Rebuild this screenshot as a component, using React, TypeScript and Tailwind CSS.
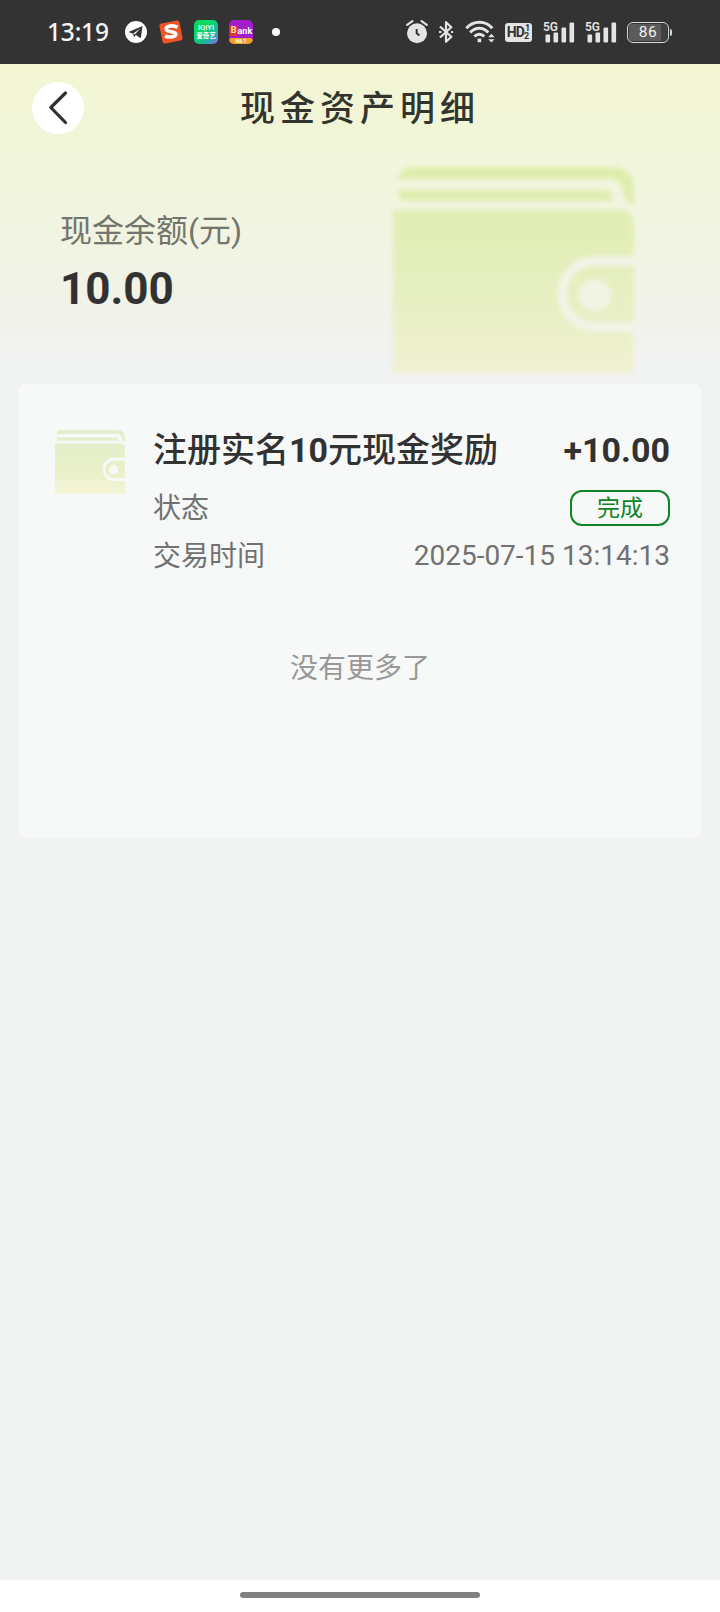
import React from 'react';

const records = [
  { id: 1, title: '注册实名10元现金奖励', amount: '+10.00', status: '完成', time: '2025-07-15 13:14:13' },
];

export default function App() {
  return (
    <div className="w-[720px] h-[1612px] flex flex-col overflow-hidden bg-[#f1f3f2] text-[#323232] font-[Roboto,'Noto_Sans_CJK_SC',sans-serif]">
      <StatusBar />

      {/* Header + balance */}
      <div className="relative h-[320px] shrink-0 bg-[linear-gradient(180deg,#f2f6d2_0%,#f1f5dc_35%,#f1f3e8_72%,#f2f2ee_86%,#f1f2f2_92%,#f1f3f3_100%)]">
        <Wallet id="hero" className="absolute left-[393px] top-[102px] w-[241px] h-[208px] blur-[2px]" line="#f1f3e5" from="#deedab" mid="#e6efc1" to="#f0f0d2" />
        <header className="relative flex items-center justify-center h-[88px]">
          <button className="absolute left-8 top-[18px] size-[52px] rounded-full bg-white">
            <svg viewBox="0 0 52 52" className="size-[52px]" fill="none" stroke="#303030" strokeWidth="3.2" strokeLinecap="round" strokeLinejoin="round">
              <path d="M33.5 11 18.8 25.5 33.5 40.5" />
            </svg>
          </button>
          <h1 className="pt-[2px] text-[35px] leading-none font-medium tracking-[5px] text-[#33342d]">现金资产明细</h1>
        </header>
        <div className="relative pt-[57px] pl-[60px]">
          <p className="text-[32px] leading-[44px] text-[#74766d]">现金余额(元)</p>
          <p className="mt-[8px] text-[44px] leading-[56px] font-bold">10.00</p>
        </div>
      </div>

      {/* Records */}
      <div className="mx-[18px] h-[454px] rounded-lg bg-[#f7f9f8] pt-[44px] pl-[37px] pr-[32px]">
        {records.map(r => (
          <div key={r.id} className="flex">
            <Wallet id="row" className="w-[70px] h-[64px] mt-[2px] blur-[0.6px] shrink-0" line="#f7f9f6" from="#e4edcc" mid="#e8f0c8" to="#f4f4d6" />
            <div className="flex-1 ml-[28px]">
              <div className="flex items-center justify-between h-[44px] text-[34px] leading-[44px]">
                <span className="font-medium">{r.title.split(/(\d+)/).map((part, i) => (
                  <span key={i} className={/\d/.test(part) ? 'font-bold' : ''}>{part}</span>
                ))}</span>
                <span className="font-bold">{r.amount}</span>
              </div>
              <div className="flex items-center justify-between mt-[12px] h-[48px] text-[28px] text-[#707170]">
                <span className="pt-[2px]">状态</span>
                <span className="w-[100px] h-[36px] flex items-center justify-center rounded-[12px] border-2 border-[#0e8426] text-[23px] leading-none text-[#0e8426]">{r.status}</span>
              </div>
              <div className="flex items-center justify-between h-[48px] text-[28px] text-[#707170]">
                <span className="pt-[2px]">交易时间</span>
                <span>{r.time}</span>
              </div>
            </div>
          </div>
        ))}
        <p className="mt-[69px] -ml-[5px] text-center text-[28px] leading-[40px] text-[#979897]">没有更多了</p>
      </div>

      <div className="mt-auto h-8 flex items-center justify-center bg-white">
        <div className="w-[240px] h-[6px] mb-[2px] rounded-full bg-[#808080]" />
      </div>
    </div>
  );
}

function StatusBar() {
  return (
    <div className="h-16 shrink-0 flex items-center bg-[#333333] text-[#e4e4e4]">
      <span className="w-[78px] ml-[47px] text-[24.5px] leading-none font-medium tracking-[-0.2px] text-[#f4f4f4] font-['Noto_Sans',sans-serif] whitespace-nowrap">13:19</span>

      {/* Telegram */}
      <svg viewBox="0 0 22 22" className="size-[22px]">
        <circle cx="11" cy="11" r="11" fill="#fff" />
        <path d="M3.5 11 17.5 5 15.8 17.2 10.8 14 9 16.3 8 12.7Z" fill="#333" />
        <path d="M8.3 12.6 15.5 7.2 9.8 13.4" fill="#fff" />
      </svg>

      {/* Sogou */}
      <svg viewBox="0 0 24 24" className="size-6 ml-[12px]">
        <rect x="1.8" y="1.8" width="20.4" height="20.4" rx="2.5" fill="#ee5426" transform="rotate(-11 12 12)" />
        <path d="M18.5 7.4C14 4.6 6.8 6 7.2 9.2 7.6 12.4 16.8 11 16.8 14 16.8 17.3 9.6 17.8 6 15.9" fill="none" stroke="#fff" strokeWidth="3.6" />
      </svg>

      {/* iQIYI */}
      <div className="size-6 ml-[11px] rounded-[5px] flex flex-col items-center justify-center bg-[linear-gradient(135deg,#05d95f_35%,#1cb6a2_70%,#8b64ee)] text-white font-bold overflow-hidden">
        <span className="text-[7.5px] leading-[8px] font-medium">IQIYI</span>
        <span className="text-[6.5px] leading-[8px] whitespace-nowrap">爱奇艺</span>
      </div>

      {/* Bank */}
      <div className="size-6 ml-[11px] rounded-[5px] flex flex-col justify-end bg-[#a51dcb] text-white font-bold overflow-hidden">
        <span className="flex items-center justify-center h-[14px] text-[9px] leading-none">
          <span className="bg-[#df3433] text-[#ffe3b0] h-[10px] px-px">B</span>ank
        </span>
        <span className="h-[6px] rounded-t-[3px] bg-[#f5a02b] text-center text-[5px] leading-[6px]">N6·1</span>
      </div>

      <span className="size-2 ml-[19px] rounded-full bg-white" />

      {/* Alarm */}
      <svg viewBox="0 0 22 24" className="w-[22px] h-6 ml-[126px]" fill="none" stroke="currentColor">
        <circle cx="11" cy="13.2" r="10" fill="currentColor" stroke="none" />
        <path d="M1.2 4.8 6.4 1.2M20.8 4.8 15.6 1.2" strokeWidth="2.2" strokeLinecap="round" />
        <path d="M10.7 9V13.2L13.4 15.6" stroke="#333" strokeWidth="2" />
      </svg>

      {/* Bluetooth */}
      <svg viewBox="0 0 14 22" className="w-[14px] h-[22px] ml-[11px]" fill="none" stroke="currentColor" strokeWidth="2.2" strokeLinejoin="round">
        <path d="M1 5.5 12.3 15.8 7 20.8V1.2L12.3 6.2 1 16.5" />
        <path d="M0 11H2.4M12 11H14.4" />
      </svg>

      {/* Wifi */}
      <svg viewBox="0 0 30 24" className="w-[30px] h-6 ml-[12px]" fill="none" stroke="currentColor" strokeWidth="3">
        <path d="M1.3 8.2C8.5.2 20.5.2 27.3 8.2M5.2 12.4C10.3 6.8 18.3 6.8 23.2 12.4M9.4 16.6C12.3 13.5 16.4 13.5 19.2 16.6" />
        <rect x="12.6" y="18.6" width="3.6" height="3.6" fill="currentColor" stroke="none" />
        <path d="M23.2 17.2 26.4 13.8 29.6 17.2ZM23.2 19.2 26.4 22.6 29.6 19.2Z" fill="currentColor" stroke="none" />
      </svg>

      {/* HD */}
      <div className="w-[27px] h-[19px] ml-[10px] rounded-[3px] bg-[#e4e4e4] text-[#333333] flex items-center justify-center font-bold">
        <span className="text-[14px] leading-none tracking-[-0.8px]">HD</span>
        <span className="flex flex-col text-[9px] leading-[8px] ml-px"><span>1</span><span className="-ml-px">2</span></span>
      </div>

      <Signal className="ml-[11px]" />
      <Signal className="ml-[10px]" />

      {/* Battery */}
      <div className="ml-[10px] w-[42px] h-[21px] rounded-[6px] border-[1.5px] border-[#d8d8d8] p-px flex">
        <span className="flex-1 pt-px rounded-[3px] bg-[linear-gradient(90deg,#5c5c5c_84%,#414141_84%)] flex items-center justify-center text-[15.5px] leading-none tracking-[0.5px] text-[#f0f0f0]">86</span>
      </div>
      <span className="w-[2px] h-[7px] ml-px rounded-r bg-[#d8d8d8]" />
    </div>
  );
}

function Signal({ className }: { className: string }) {
  return (
    <svg viewBox="0 0 32 24" className={`w-8 h-6 shrink-0 ${className}`} fill="currentColor">
      <text x="0" y="11" fontSize="13" fontWeight="600" textLength="15" lengthAdjust="spacingAndGlyphs">5G</text>
      <rect x="2.5" y="14.5" width="4.6" height="8" rx="1" />
      <rect x="10.5" y="12.5" width="4.6" height="10" rx="1" />
      <rect x="18.5" y="7.5" width="4.6" height="15" rx="1" />
      <rect x="26.5" y="2.5" width="4.6" height="20" rx="1" />
    </svg>
  );
}

function Wallet({ id, className, line, from, mid, to }: any) {
  return (
    <svg viewBox="0 0 241 208" preserveAspectRatio="none" className={className}>
      <defs>
        <linearGradient id={id} x1="0" y1="0" x2="0" y2="208" gradientUnits="userSpaceOnUse">
          <stop offset="0" stopColor={from} />
          <stop offset="0.6" stopColor={mid} />
          <stop offset="1" stopColor={to} />
        </linearGradient>
      </defs>
      <g fill={`url(#${id})`}>
        <path d="M5 13Q8 1 18 1H218Q241 1 241 24V39Q234 38 231 29Q227 13 219 13Z" />
        <path d="M5 24H212Q219 24 219 35H12Q7 35 5 24Z" />
        <path d="M0 44H226Q241 44 241 60V207H0Z" />
      </g>
      <path d="M242 95H202A33 33 0 0 0 202 161H242" fill="none" stroke={line} strokeWidth="10" />
      <circle cx="202" cy="129" r="16" fill={line} />
    </svg>
  );
}
